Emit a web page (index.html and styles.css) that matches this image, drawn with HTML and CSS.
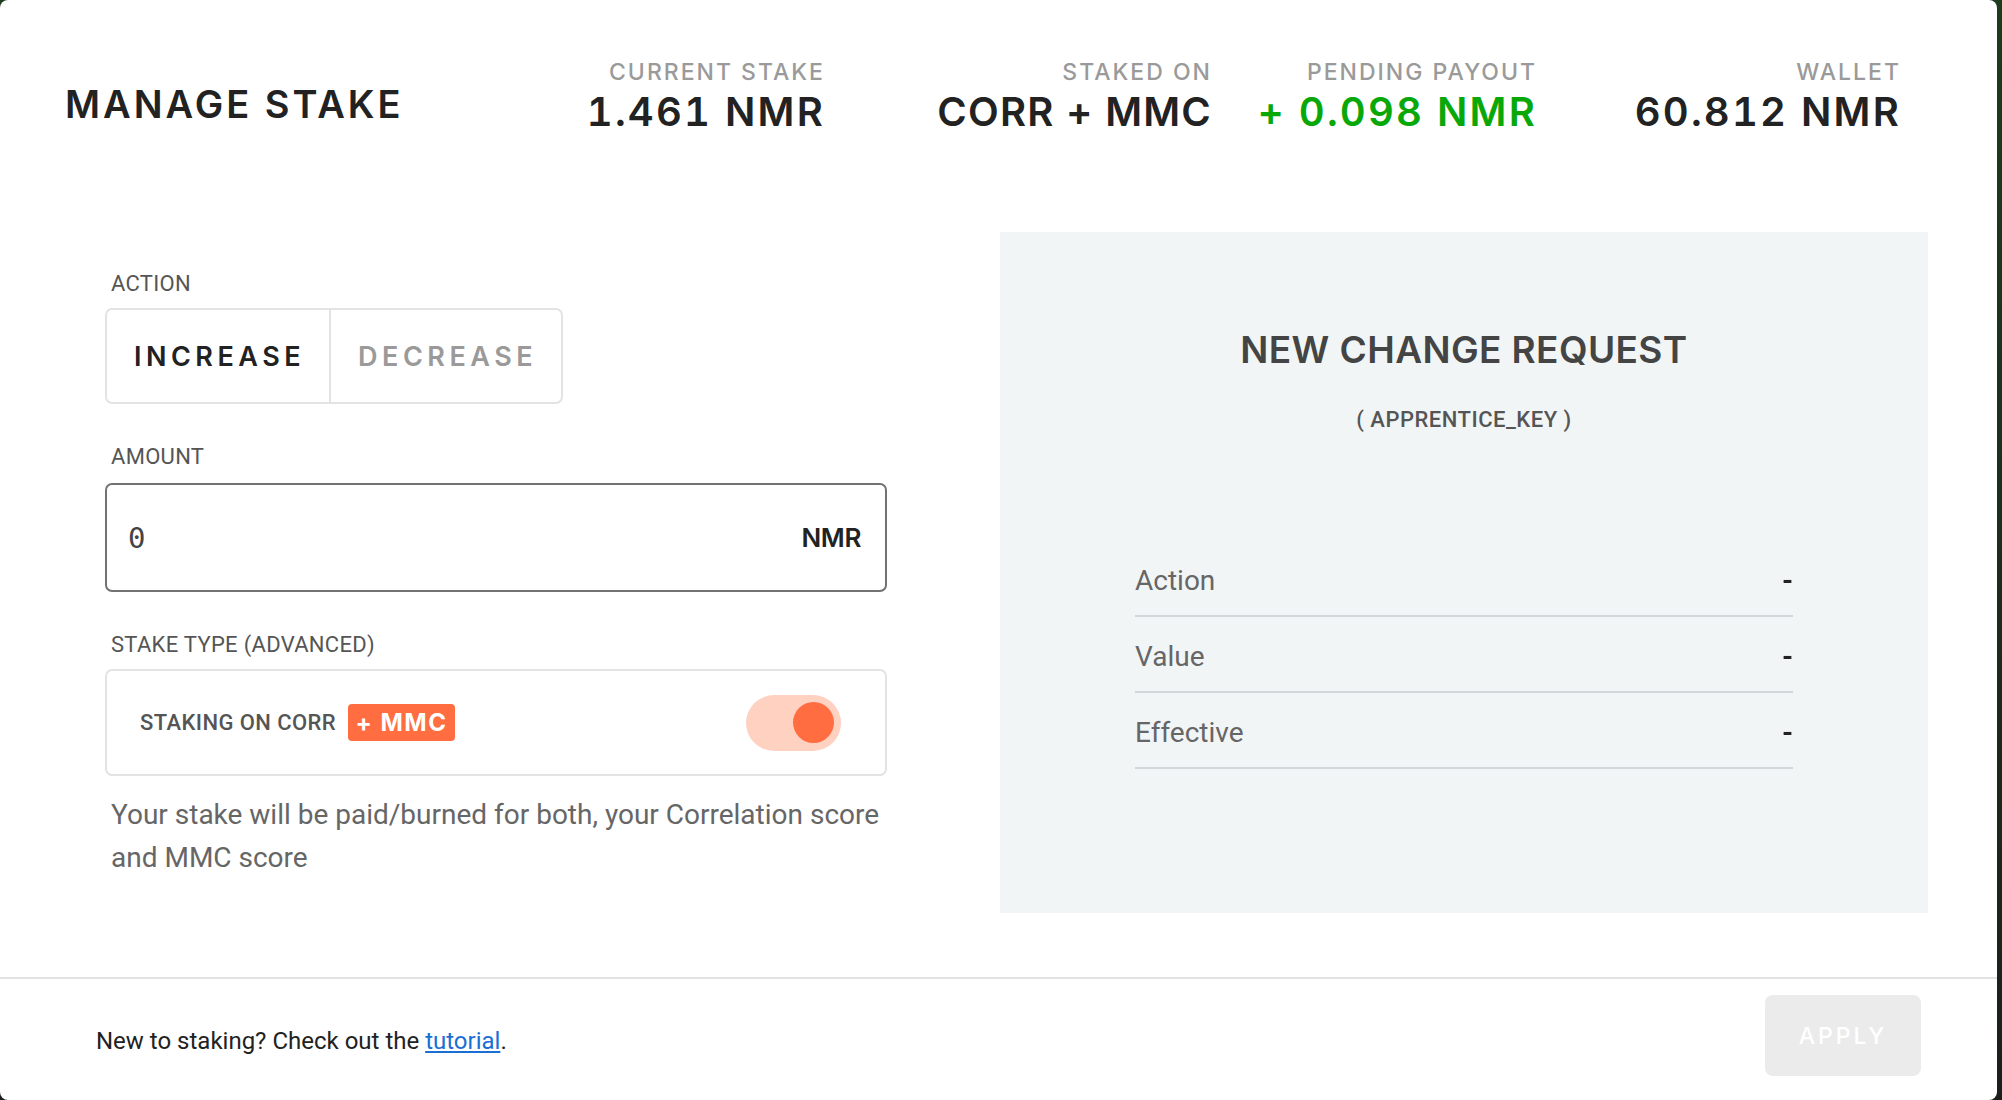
FILE: index.html
```html
<!DOCTYPE html>
<html lang="en">
<head>
<meta charset="utf-8">
<title>Manage Stake</title>
<link rel="stylesheet" href="styles.css">
</head>
<body>
<div class="modal">
  <header class="head">
    <h1 class="title">MANAGE STAKE</h1>
    <div class="stat">
      <div class="stat-label">CURRENT STAKE</div>
      <div class="stat-value num">1.461 NMR</div>
    </div>
    <div class="stat">
      <div class="stat-label">STAKED ON</div>
      <div class="stat-value">CORR + MMC</div>
    </div>
    <div class="stat">
      <div class="stat-label">PENDING PAYOUT</div>
      <div class="stat-value num green">+ 0.098 NMR</div>
    </div>
    <div class="stat">
      <div class="stat-label">WALLET</div>
      <div class="stat-value num">60.812 NMR</div>
    </div>
  </header>

  <main class="body">
    <section class="form">
      <div class="label first">ACTION</div>
      <div class="seg">
        <div class="seg-btn active">INCREASE</div>
        <div class="seg-btn">DECREASE</div>
      </div>

      <div class="label">AMOUNT</div>
      <div class="amount">
        <span class="amount-val">0</span>
        <span class="amount-unit">NMR</span>
      </div>

      <div class="label">STAKE TYPE (ADVANCED)</div>
      <div class="type">
        <span class="type-text">STAKING ON CORR</span>
        <span class="badge">+ MMC</span>
        <span class="toggle"><span class="knob"></span></span>
      </div>
      <p class="desc">Your stake will be paid/burned for both, your Correlation score and MMC score</p>
    </section>

    <section class="panel">
      <h2 class="panel-title">NEW CHANGE REQUEST</h2>
      <div class="panel-sub">( APPRENTICE_KEY )</div>
      <div class="rows">
        <div class="row"><span>Action</span><span class="dash">-</span></div>
        <div class="row"><span>Value</span><span class="dash">-</span></div>
        <div class="row"><span>Effective</span><span class="dash">-</span></div>
      </div>
    </section>
  </main>

  <footer class="foot">
    <p class="foot-text">New to staking? Check out the <a href="#" class="link">tutorial</a>.</p>
    <button class="apply" type="button">APPLY</button>
  </footer>
</div>
</body>
</html>
```

FILE: styles.css
```css
* { box-sizing: border-box; }

html, body {
  margin: 0;
  padding: 0;
}

body {
  width: 2002px;
  height: 1100px;
  overflow: hidden;
  background: linear-gradient(180deg, #1d3b1d 0%, #1b1f1b 100%);
  font-family: Roboto, "Liberation Sans", sans-serif;
}

.modal {
  width: 1997px;
  height: 1100px;
  background: #ffffff;
  border-radius: 8px;
  display: flex;
  flex-direction: column;
}

/* ---------- header ---------- */
.head {
  display: grid;
  grid-template-columns: 1fr 300px 387px 325px 364px;
  align-items: end;
  padding: 58px 96px 0 65px;
  font-family: Inter, "DejaVu Sans", sans-serif;
}

.title {
  margin: 0 0 8px 0;
  font-size: 38px;
  line-height: 44px;
  font-weight: 600;
  letter-spacing: 3px;
  color: #222222;
}

.stat {
  text-align: right;
}

.stat-label {
  font-size: 23px;
  line-height: 28px;
  font-weight: 500;
  letter-spacing: 2px;
  color: #9a9a9a;
}

.stat-value {
  margin-top: 4px;
  font-size: 40px;
  line-height: 44px;
  font-weight: 600;
  letter-spacing: 1.2px;
  color: #222222;
  white-space: nowrap;
}

.stat-value.num {
  font-variant-numeric: tabular-nums;
  letter-spacing: 2.2px;
}

.stat-value.green {
  color: #08a808;
}

/* ---------- body ---------- */
.body {
  display: flex;
  gap: 95px;
  padding: 98px 69px 0 105px;
  height: 845px;
  border-bottom: 2px solid #e2e2e2;
}

.form {
  width: 800px;
  padding-top: 40px;
}

.label {
  padding-left: 6px;
  margin-top: 41px;
  font-size: 22px;
  line-height: 24px;
  letter-spacing: 0.3px;
  color: #555555;
}

.label.first {
  margin-top: 0;
}

.seg {
  display: inline-flex;
  margin-top: 12px;
  height: 96px;
  border: 2px solid #e3e3e3;
  border-radius: 7px;
  font-family: Inter, "DejaVu Sans", sans-serif;
}

.seg-btn {
  display: flex;
  align-items: center;
  padding: 0 24px 0 27px;
  font-size: 27px;
  font-weight: 600;
  letter-spacing: 4.5px;
  color: #9a9a9a;
}

.seg-btn.active {
  color: #222222;
  border-right: 2px solid #e3e3e3;
}

.amount {
  display: flex;
  align-items: center;
  justify-content: space-between;
  width: 782px;
  height: 109px;
  margin-top: 14px;
  padding: 0 24px 0 21px;
  border: 2px solid #727272;
  border-radius: 7px;
}

.amount-val {
  font-family: "DejaVu Sans Mono", "Liberation Mono", monospace;
  font-size: 29px;
  color: #444444;
}

.amount-unit {
  font-family: Inter, "DejaVu Sans", sans-serif;
  font-size: 26px;
  font-weight: 600;
  letter-spacing: -0.4px;
  color: #222222;
}

.type {
  display: flex;
  align-items: center;
  width: 782px;
  height: 107px;
  margin-top: 12px;
  padding: 0 44px 0 33px;
  border: 2px solid #e3e3e3;
  border-radius: 7px;
}

.type-text {
  font-size: 22px;
  font-weight: 500;
  letter-spacing: 0.4px;
  color: #555555;
}

.badge {
  margin-left: 12px;
  height: 37px;
  width: 107px;
  display: flex;
  align-items: center;
  justify-content: center;
  background: #ff6d40;
  border-radius: 4px;
  color: #ffffff;
  font-family: Inter, "DejaVu Sans", sans-serif;
  font-size: 24px;
  font-weight: 700;
  letter-spacing: 1.5px;
}

.toggle {
  margin-left: auto;
  width: 95px;
  height: 56px;
  border-radius: 28px;
  background: #ffd1c1;
  display: flex;
  align-items: center;
  justify-content: flex-end;
  padding-right: 7px;
}

.knob {
  width: 41px;
  height: 41px;
  border-radius: 50%;
  background: #ff6d40;
}

.desc {
  margin: 17px 0 0 0;
  padding-left: 6px;
  font-size: 28px;
  line-height: 43px;
  color: #666666;
}

/* ---------- right panel ---------- */
.panel {
  width: 928px;
  height: 681px;
  background: #f2f5f6;
  padding-top: 96px;
  display: flex;
  flex-direction: column;
  align-items: center;
}

.panel-title {
  margin: 0;
  font-family: Inter, "DejaVu Sans", sans-serif;
  font-size: 37px;
  line-height: 44px;
  font-weight: 600;
  letter-spacing: 0.4px;
  color: #444444;
}

.panel-sub {
  margin-top: 36px;
  font-size: 22px;
  line-height: 24px;
  font-weight: 500;
  letter-spacing: 0.5px;
  color: #555555;
}

.rows {
  width: 658px;
  margin-top: 109px;
}

.row {
  display: flex;
  justify-content: space-between;
  align-items: center;
  height: 76px;
  padding: 24px 0 18px 0;
  border-bottom: 2px solid #d3d6d9;
  font-size: 28px;
  line-height: 32px;
  color: #666666;
}

.dash {
  font-weight: 700;
  color: #222222;
}

/* ---------- footer ---------- */
.foot {
  display: flex;
  align-items: flex-start;
  justify-content: space-between;
  padding: 16px 76px 0 96px;
}

.foot-text {
  margin: 32px 0 0 0;
  font-size: 24px;
  line-height: 28px;
  color: #222222;
}

.link {
  color: #1a6fd4;
  text-decoration: underline;
}

.apply {
  width: 156px;
  height: 81px;
  border: none;
  border-radius: 8px;
  background: #ebebeb;
  color: #ffffff;
  font-family: Inter, "DejaVu Sans", sans-serif;
  font-size: 23px;
  font-weight: 500;
  letter-spacing: 3px;
  padding: 0;
}
```
